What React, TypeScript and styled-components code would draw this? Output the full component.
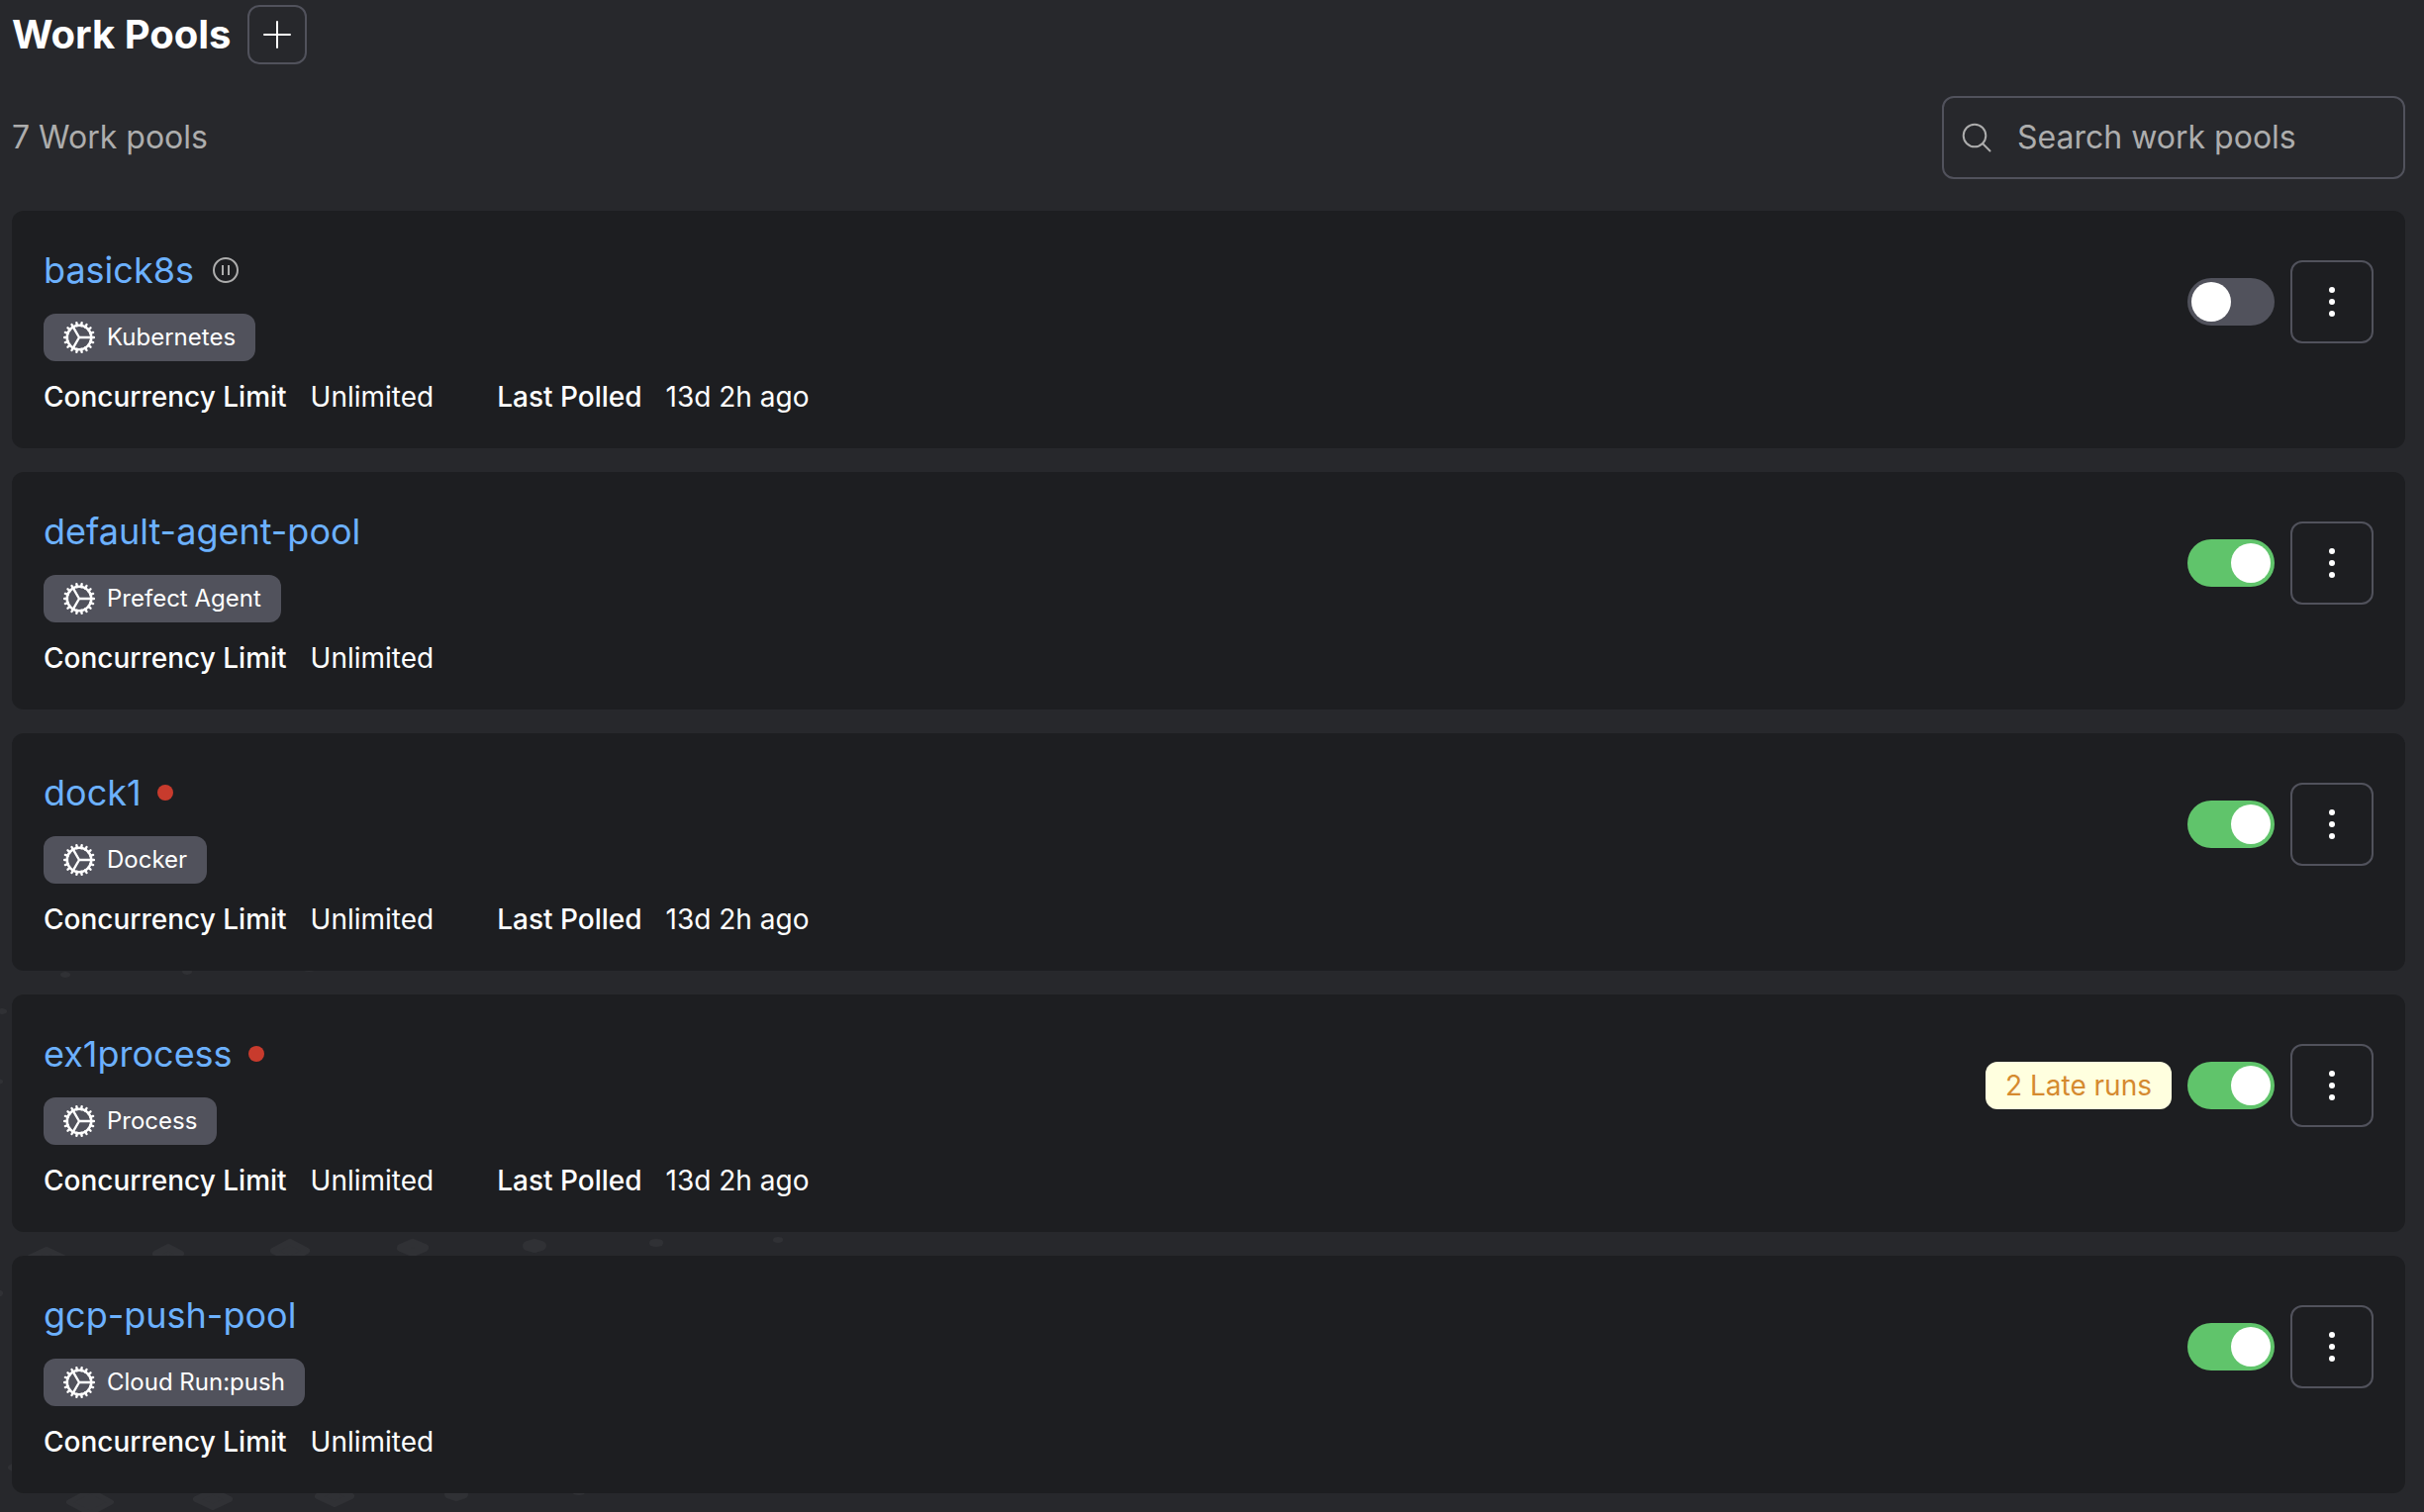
import React, { useState } from 'react';
import styled, { createGlobalStyle } from 'styled-components';

const GlobalStyle = createGlobalStyle`
  *, *::before, *::after { box-sizing: border-box; }
  body {
    margin: 0;
    background: #27282c;
    color: #fff;
    font-family: Inter, "Liberation Sans", sans-serif;
  }
  button, input { font: inherit; color: inherit; }
`;

const Page = styled.main`
  position: relative;
  min-height: 100vh;
  overflow: hidden;
  padding: 5px 19px 20px 12px;
  display: flex;
  flex-direction: column;
  gap: 32px;
`;

const Backdrop = styled.svg`
  position: absolute;
  left: 0;
  top: 960px;
  width: 850px;
  height: 568px;
  fill: #303135;
  stroke: #303135;
  stroke-linejoin: round;
  pointer-events: none;
`;

const Header = styled.header`
  display: flex;
  align-items: center;
  gap: 16px;
`;

const Title = styled.h1`
  margin: 0;
  font-size: 40px;
  line-height: 60px;
  font-weight: 700;
`;

const IconButton = styled.button<{ $size: number }>`
  width: ${p => p.$size}px;
  height: ${p => p.$size}px;
  flex: none;
  display: flex;
  align-items: center;
  justify-content: center;
  padding: 0;
  border: 2px solid #51525c;
  border-radius: 12px;
  background: transparent;
  color: #fff;
  cursor: pointer;
`;

const Toolbar = styled.div`
  display: flex;
  align-items: center;
  justify-content: space-between;
`;

const Count = styled.span`
  font-size: 32px;
  line-height: 48px;
  color: #adadad;
`;

const SearchBox = styled.label`
  display: flex;
  align-items: center;
  gap: 24px;
  width: 468px;
  height: 84px;
  padding: 0 16px;
  border: 2px solid #51525c;
  border-radius: 12px;
  color: #adadad;
`;

const SearchInput = styled.input`
  flex: 1;
  min-width: 0;
  padding: 0;
  border: 0;
  outline: 0;
  background: transparent;
  font-size: 32px;
  line-height: 48px;
  &::placeholder { color: #adadad; opacity: 1; }
`;

const List = styled.ul`
  position: relative;
  margin: 0;
  padding: 0;
  list-style: none;
  display: flex;
  flex-direction: column;
  gap: 24px;
`;

const Card = styled.li`
  display: flex;
  align-items: flex-start;
  justify-content: space-between;
  padding: 32px;
  border-radius: 12px;
  background: #1d1e21;
`;

const Info = styled.div`
  display: flex;
  flex-direction: column;
  align-items: flex-start;
  gap: 16px;
`;

const NameRow = styled.div`
  display: flex;
  align-items: center;
  gap: 16px;
  height: 56px;
`;

const PoolLink = styled.a`
  font-size: 36px;
  line-height: 56px;
  color: #6cb1ff;
  text-decoration: none;
`;

const StatusDot = styled.span`
  width: 16px;
  height: 16px;
  border-radius: 50%;
  background: #c83b2d;
`;

const TypeTag = styled.span`
  display: flex;
  align-items: center;
  gap: 12px;
  height: 48px;
  padding: 0 20px;
  border-radius: 12px;
  background: #51525c;
  font-size: 24px;
  line-height: 32px;
`;

const Details = styled.dl`
  display: flex;
  gap: 64px;
  margin: 0;
  font-size: 28px;
  line-height: 40px;
`;

const Detail = styled.div`
  display: flex;
  gap: 24px;
`;

const Term = styled.dt`
  font-weight: 500;
`;

const Value = styled.dd`
  margin: 0;
`;

const Actions = styled.div`
  display: flex;
  align-items: center;
  gap: 16px;
  padding-top: 18px;
`;

const LateTag = styled.span`
  padding: 4px 20px;
  border-radius: 12px;
  background: #ffffdf;
  color: #d58a2f;
  font-size: 28px;
  line-height: 40px;
`;

const Toggle = styled.input`
  appearance: none;
  display: flex;
  width: 88px;
  height: 48px;
  margin: 0;
  padding: 4px;
  border-radius: 24px;
  background: #51525c;
  cursor: pointer;
  &::before {
    content: "";
    width: 40px;
    height: 40px;
    border-radius: 50%;
    background: #fff;
  }
  &:checked {
    justify-content: flex-end;
    background: #60c46b;
  }
`;

type Pool = {
  name: string;
  type: string;
  status: 'paused' | 'notReady' | 'ready';
  lastPolled?: string;
  lateRuns?: number;
};

const pools: Pool[] = [
  { name: 'basick8s', type: 'Kubernetes', status: 'paused', lastPolled: '13d 2h ago' },
  { name: 'default-agent-pool', type: 'Prefect Agent', status: 'ready' },
  { name: 'dock1', type: 'Docker', status: 'notReady', lastPolled: '13d 2h ago' },
  { name: 'ex1process', type: 'Process', status: 'notReady', lastPolled: '13d 2h ago', lateRuns: 2 },
  { name: 'gcp-push-pool', type: 'Cloud Run:push', status: 'ready' },
];

// Rounded diamonds: centre x, centre y, half width, half height, corner rounding.
const diamonds = [
  [66, 25, 5, 3, 4], [189, 22, 5, 3, 4], [312, 20, 5, 2, 3], [2, 62, 5, 3, 4], [-2, 133, 5, 3, 4],
  [47, 311, 20, 11, 6], [170, 307, 16, 10, 7], [293, 304, 20, 12, 6], [417, 301, 16, 9, 8],
  [540, 299, 12, 7, 10], [663, 296, 7, 4, 7], [786, 293, 5, 3, 5],
  [-16, 347, 19, 11, 6], [30, 523, 22, 13, 5],
  [91, 558, 24, 14, 5], [215, 555, 20, 11, 6], [338, 552, 20, 11, 6], [461, 550, 12, 7, 9], [585, 548, 6, 3, 5],
];

const Pattern = () => (
  <Backdrop viewBox="0 0 850 568" aria-hidden="true">
    {diamonds.map(([x, y, w, h, r]) => {
      const a = w - r / 2;
      const b = h - r / 2;
      return (
        <path
          key={`${x}-${y}`}
          strokeWidth={r}
          d={`M${x - a} ${y}L${x} ${y - b}L${x + a} ${y}L${x} ${y + b}Z`}
        />
      );
    })}
  </Backdrop>
);

const PlusIcon = () => (
  <svg width="28" height="28" viewBox="0 0 28 28" fill="none" stroke="currentColor" strokeWidth="2" strokeLinecap="round" aria-hidden="true">
    <path d="M14 1v26M1 14h26" />
  </svg>
);

const SearchIcon = () => (
  <svg width="34" height="34" viewBox="0 0 34 34" fill="none" stroke="currentColor" strokeWidth="2" strokeLinecap="round" aria-hidden="true">
    <circle cx="15" cy="15" r="11.3" />
    <path d="M23 23l7.5 7.5" />
  </svg>
);

const PauseIcon = () => (
  <svg width="32" height="32" viewBox="0 0 32 32" fill="none" stroke="#adadad" strokeWidth="2" role="img" aria-label="Paused">
    <circle cx="16" cy="16" r="12" />
    <path d="M13 11v10M19 11v10" />
  </svg>
);

const DotsIcon = () => (
  <svg width="8" height="32" viewBox="0 0 8 32" fill="currentColor" aria-hidden="true">
    <circle cx="4" cy="4" r="3" />
    <circle cx="4" cy="16" r="3" />
    <circle cx="4" cy="28" r="3" />
  </svg>
);

const teeth = Array.from({ length: 18 }, (_, i) => i * 20);

const CogIcon = () => (
  <svg width="32" height="32" viewBox="0 0 32 32" fill="none" stroke="currentColor" aria-hidden="true">
    <circle cx="16" cy="16" r="12.2" strokeWidth="2.6" />
    {teeth.map(angle => (
      <path key={angle} d="M28 16h3" strokeWidth="2.4" strokeLinecap="round" transform={`rotate(${angle} 16 16)`} />
    ))}
    <path d="M16 16h12M16 16L10 5.6M16 16L10 26.4" strokeWidth="2.4" strokeLinejoin="round" />
  </svg>
);

const PoolCard = ({ pool }: { pool: Pool }) => {
  const [active, setActive] = useState(pool.status !== 'paused');
  return (
    <Card>
      <Info>
        <NameRow>
          <PoolLink href="#">{pool.name}</PoolLink>
          {pool.status === 'paused' && <PauseIcon />}
          {pool.status === 'notReady' && <StatusDot role="img" aria-label="Not ready" />}
        </NameRow>
        <TypeTag><CogIcon />{pool.type}</TypeTag>
        <Details>
          <Detail><Term>Concurrency Limit</Term><Value>Unlimited</Value></Detail>
          {pool.lastPolled && <Detail><Term>Last Polled</Term><Value>{pool.lastPolled}</Value></Detail>}
        </Details>
      </Info>
      <Actions>
        {pool.lateRuns && <LateTag>{pool.lateRuns} Late runs</LateTag>}
        <Toggle
          type="checkbox"
          role="switch"
          aria-label={`Enable ${pool.name}`}
          checked={active}
          onChange={e => setActive(e.target.checked)}
        />
        <IconButton $size={84} type="button" aria-label={`Actions for ${pool.name}`}><DotsIcon /></IconButton>
      </Actions>
    </Card>
  );
};

export default function App() {
  return (
    <>
      <GlobalStyle />
      <Page>
        <Pattern />
        <Header>
          <Title>Work Pools</Title>
          <IconButton $size={60} type="button" aria-label="Create work pool"><PlusIcon /></IconButton>
        </Header>
        <Toolbar>
          <Count>7 Work pools</Count>
          <SearchBox>
            <SearchIcon />
            <SearchInput type="search" aria-label="Search work pools" placeholder="Search work pools" />
          </SearchBox>
        </Toolbar>
        <List>
          {pools.map(pool => <PoolCard key={pool.name} pool={pool} />)}
        </List>
      </Page>
    </>
  );
}
